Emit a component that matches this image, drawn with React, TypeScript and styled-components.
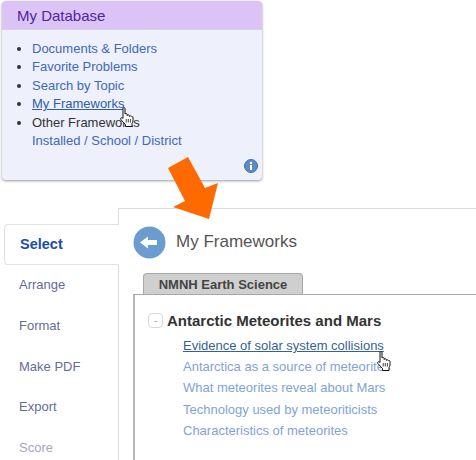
import styled, { createGlobalStyle } from "styled-components";

const GlobalStyle = createGlobalStyle`
  html, body {
    margin: 0;
    padding: 0;
    background: #fff;
    font-family: "Liberation Sans", Arial, sans-serif;
  }
`;
const Page = styled.div`
  position: relative;
  width: 476px;
  height: 460px;
  overflow: hidden;
`;
const DbCard = styled.div`
  width: 260px;
  height: 179px;
  margin: 1px 0 0 2px;
  display: flex;
  flex-direction: column;
  background: #eef0fb;
  border-radius: 4px;
  box-shadow: 0 1px 3px rgba(0, 0, 0, 0.4);
  position: relative;
`;
const DbHeader = styled.div`
  height: 28px;
  padding-left: 15px;
  display: flex;
  align-items: center;
  background: #dcc3f6;
  border-bottom: 1px solid #d5d2e6;
  border-radius: 4px 4px 0 0;
  color: #51259b;
  font-size: 15px;
`;
const DbList = styled.ul`
  margin: 0;
  padding: 10px 0 0 30px;
  list-style: disc;
  font-size: 13px;
  line-height: 18.4px;
  color: #333;
`;
const DbLink = styled.a<{ $active?: boolean }>`
  display: inline-block;
  color: ${(p) => (p.$active ? "#2f5ea8" : "#4069b8")};
  text-decoration: ${(p) => (p.$active ? "underline" : "none")};
`;
const InfoBadge = styled.svg`
  position: absolute;
  right: 4px;
  bottom: 7px;
`;
const Lower = styled.div`
  display: flex;
  width: 476px;
  margin-top: 28px;
  height: 252px;
`;
const Sidebar = styled.div`
  width: 114px;
  margin-left: 4px;
  padding-top: 16px;
  display: flex;
  flex-direction: column;
  flex-shrink: 0;
`;
const SideTab = styled.div<{ $active?: boolean; $muted?: boolean }>`
  height: 40.6px;
  flex-shrink: 0;
  box-sizing: border-box;
  display: flex;
  align-items: center;
  padding-left: 15px;
  font-size: ${(p) => (p.$active ? "14.5px" : "13px")};
  font-weight: ${(p) => (p.$active ? 700 : 400)};
  color: ${(p) => (p.$active ? "#1c4ca6" : p.$muted ? "#a3a8bb" : "#646c96")};
  background: #fff;
  position: relative;
  z-index: 1;
  ${(p) =>
    p.$active
      ? `
    margin-right: -1px;
    border: 1px solid #e2e2e2;
    border-right: none;
    border-radius: 4px 0 0 4px;
  `
      : ""}
`;
const Main = styled.div`
  flex: 1;
  border-left: 1px solid #dcdcdc;
  border-top: 1px solid #dcdcdc;
  padding: 16px 0 0 14px;
  min-width: 0;
`;
const TitleRow = styled.div`
  display: flex;
  align-items: center;
  gap: 10px;
  height: 34px;
`;
const Title = styled.div`
  font-size: 17px;
  color: #555;
`;
const Tab = styled.div`
  width: 160px;
  height: 21px;
  box-sizing: border-box;
  margin: 14px 0 0 10px;
  display: flex;
  align-items: center;
  justify-content: center;
  background: #cfcfcf;
  border: 1px solid #a8a8a8;
  border-bottom: none;
  border-radius: 4px 4px 0 0;
  font-size: 13px;
  font-weight: 700;
  color: #444;
`;
const TreeBox = styled.div`
  height: 166px;
  box-sizing: border-box;
  border-top: 1px solid #a8a8a8;
  border-left: 2px solid #b8b8b8;
  padding: 17px 0 0 13px;
`;
const TreeHead = styled.div`
  display: flex;
  align-items: center;
  gap: 4px;
  height: 16px;
  font-size: 15px;
  font-weight: 700;
  color: #333;
`;
const Toggle = styled.span`
  width: 15px;
  height: 15px;
  box-sizing: border-box;
  border: 1px solid #d8d8d8;
  border-radius: 4px;
  display: flex;
  align-items: center;
  justify-content: center;
  color: #aaa;
  font-size: 11px;
  font-weight: 400;
`;
const TreeList = styled.div`
  margin: 7px 0 0 35px;
  display: flex;
  flex-direction: column;
`;
const TreeLink = styled.a<{ $active?: boolean }>`
  height: 21.2px;
  line-height: 21px;
  font-size: 13px;
  white-space: nowrap;
  color: ${(p) => (p.$active ? "#355f9c" : "#7fa3d8")};
  text-decoration: ${(p) => (p.$active ? "underline" : "none")};
`;
const Arrow = styled.svg`
  position: absolute;
  left: 168px;
  top: 156px;
`;
const Cursor = styled.svg<{ $x: number; $y: number }>`
  position: absolute;
  left: ${(p) => p.$x}px;
  top: ${(p) => p.$y}px;
`;

function Hand({ x, y }: { x: number; y: number }) {
  return (
    <Cursor $x={x} $y={y} width="14" height="21" viewBox="0 0 14 21">
      <path
        d="M3 1.200C3 .4 5 .4 5 1.200V7C5 6.500 7.200 6.500 7.200 7.200V8.500C7.200 7.600 9.400 7.600 9.400 8.500V9.400C9.400 8.600 11.600 8.700 11.600 9.600C12.800 9.400 13 10 13 11C13.200 13.500 13 15 12 16.500V19.500H5.500V17.500L.8 12.500C0 11 1.500 10 3 11.500Z"
        fill="#fff"
        stroke="#111"
        strokeWidth="1"
        strokeLinejoin="round"
      />
      <path d="M6.200 12v3.500M8.300 12v3.500M10.400 12v3.500" stroke="#111" strokeWidth="0.8" />
    </Cursor>
  );
}

function App() {
  return (
    <Page>
      <GlobalStyle />
      <DbCard>
        <DbHeader>My Database</DbHeader>
        <DbList>
          <li>
            <DbLink>Documents &amp; Folders</DbLink>
          </li>
          <li>
            <DbLink>Favorite Problems</DbLink>
          </li>
          <li>
            <DbLink>Search by Topic</DbLink>
          </li>
          <li>
            <DbLink $active>My Frameworks</DbLink>
          </li>
          <li>
            Other Frameworks
            <br />
            <DbLink>Installed / School / District</DbLink>
          </li>
        </DbList>
        <InfoBadge width="14" height="14" viewBox="0 0 14 14">
          <circle cx="7" cy="7" r="6.500" fill="#5b8cc4" stroke="#3f6ea8" />
          <circle cx="7" cy="4" r="1.200" fill="#fff" />
          <rect x="6" y="6" width="2" height="5" fill="#fff" />
        </InfoBadge>
      </DbCard>
      <Lower>
        <Sidebar>
          <SideTab $active>Select</SideTab>
          <SideTab>Arrange</SideTab>
          <SideTab>Format</SideTab>
          <SideTab>Make PDF</SideTab>
          <SideTab>Export</SideTab>
          <SideTab $muted>Score</SideTab>
        </Sidebar>
        <Main>
          <TitleRow>
            <svg width="33" height="33" viewBox="0 0 33 33">
              <circle cx="16.500" cy="16.500" r="16" fill="#6a9ccf" />
              <path d="M7 16.500 15 10.500v3.500h9v5h-9v3.500z" fill="#fff" />
            </svg>
            <Title>My Frameworks</Title>
          </TitleRow>
          <Tab>NMNH Earth Science</Tab>
          <TreeBox>
            <TreeHead>
              <Toggle>-</Toggle>
              Antarctic Meteorites and Mars
            </TreeHead>
            <TreeList>
              <TreeLink $active>Evidence of solar system collisions</TreeLink>
              <TreeLink>Antarctica as a source of meteorites</TreeLink>
              <TreeLink>What meteorites reveal about Mars</TreeLink>
              <TreeLink>Technology used by meteoriticists</TreeLink>
              <TreeLink>Characteristics of meteorites</TreeLink>
            </TreeList>
          </TreeBox>
        </Main>
      </Lower>
      <Arrow width="52" height="64" viewBox="0 0 52 64">
        <path d="M0 12 20 1 37 32 50 27 41 63 5 51 17 45z" fill="#ff6a00" />
      </Arrow>
      <Hand x={120} y={107} />
      <Hand x={377} y={351} />
    </Page>
  );
}

export default App;
